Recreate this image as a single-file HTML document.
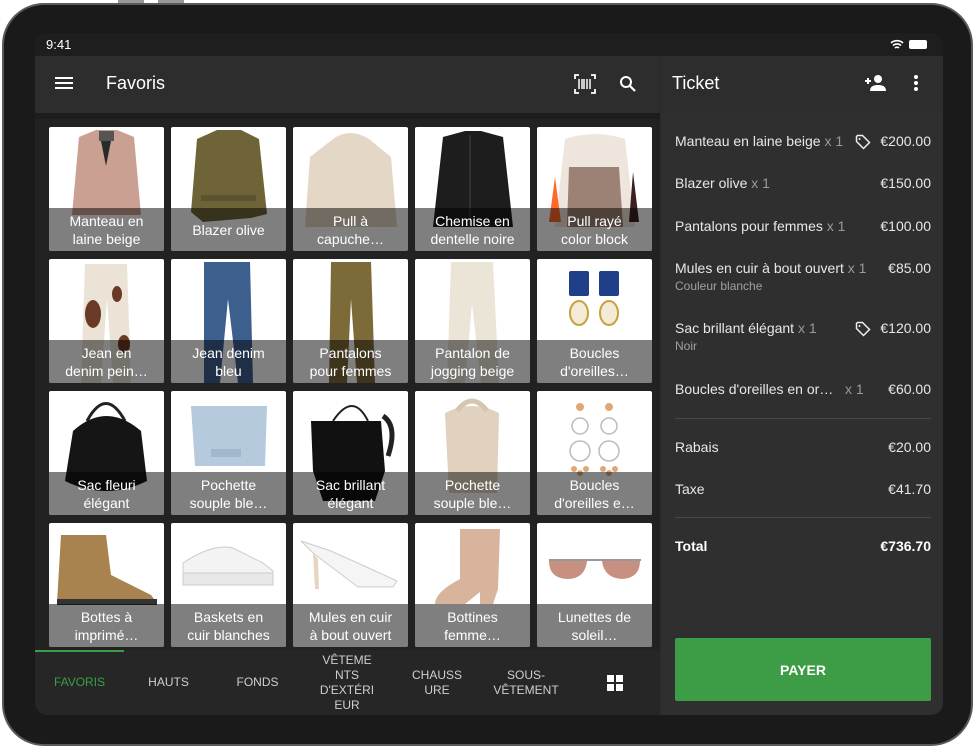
<!DOCTYPE html>
<html><head><meta charset="utf-8"><style>
*{margin:0;padding:0;box-sizing:border-box}
body{width:975px;height:748px;background:#fff;font-family:"Liberation Sans",Roboto,sans-serif;position:relative;overflow:hidden}
.dev{position:absolute;left:2px;top:3px;width:971px;height:743px;border-radius:42px;background:#1a1a1a;border:2px solid #5a5a5a}
.scr{position:absolute;left:35px;top:33px;width:908px;height:682px;border-radius:12px;background:#222;overflow:hidden}
.abs{position:absolute}
.sb{left:0;top:0;width:908px;height:23px;background:#1e1e1e;color:#fff;font-size:13px}
.ab{left:0;top:23px;width:625px;height:57px;background:#2d2d2d}
.rp{left:625px;top:23px;width:283px;height:659px;background:#2f2f2f;border-left:1px solid #2a2a2a}
.tile{position:absolute;width:115px;height:124px;background:#fff;border-radius:2px;overflow:hidden}
.tile svg{position:absolute;left:0;top:0}
.lb{position:absolute;left:0;bottom:0;width:115px;height:43px;background:rgba(0,0,0,.5);color:#fff;font-size:14px;line-height:18px;text-align:center;display:flex;align-items:center;justify-content:center;padding:0 3px}
.row{position:absolute;left:14px;width:256px;color:#e8e8e8;font-size:14px}
.row .q{color:#9a9a9a}
.row .p{position:absolute;right:0;top:0}
.row .s{color:#a0a0a0;font-size:12px;margin-top:3px}
.tab{position:absolute;top:617px;height:65px;color:#cfcfcf;font-size:12px;text-align:center;display:flex;align-items:center;justify-content:center;line-height:15px}
</style></head><body>
<div class="dev"></div>
<div class="abs" style="left:118px;top:0;width:26px;height:3px;background:#999"></div>
<div class="abs" style="left:158px;top:0;width:26px;height:3px;background:#999"></div>
<div class="scr">
 <div class="abs sb"><span class="abs" style="left:11px;top:4px">9:41</span>
  <svg class="abs" style="left:855px;top:6px" width="14" height="11" viewBox="0 0 14 11"><path d="M1 4a9 9 0 0 1 12 0M3 6.5a6 6 0 0 1 8 0M5 9a3 3 0 0 1 4 0" stroke="#fff" stroke-width="1.6" fill="none"/></svg>
  <div class="abs" style="left:874px;top:7px;width:18px;height:9px;background:#fff;border-radius:2px"></div>
 </div>
 <div class="abs ab">
  <svg class="abs" style="left:20px;top:20px" width="18" height="14"><rect y="1" width="18" height="2" fill="#fff"/><rect y="6" width="18" height="2" fill="#fff"/><rect y="11" width="18" height="2" fill="#fff"/></svg>
  <div class="abs" style="left:71px;top:17px;color:#fff;font-size:18px">Favoris</div>
  <svg class="abs" style="left:539px;top:18px" width="22" height="20" viewBox="0 0 22 20"><path d="M1 5V1h4M17 1h4v4M21 15v4h-4M5 19H1v-4" stroke="#fff" stroke-width="1.8" fill="none"/><path d="M5 5v10M8 5v10M10 5v10M13 5v10M16 5v10" stroke="#fff" stroke-width="1.5"/></svg>
  <svg class="abs" style="left:584px;top:19px" width="18" height="18" viewBox="0 0 18 18"><circle cx="7" cy="7" r="5" stroke="#fff" stroke-width="2" fill="none"/><path d="M10.5 10.5L16 16" stroke="#fff" stroke-width="2.2"/></svg>
 </div>
 <div class="abs rp">
  <div class="abs" style="left:0;top:0;width:283px;height:57px;background:#2d2d2d"></div>
  <div class="abs" style="left:11px;top:17px;color:#fff;font-size:18px">Ticket</div>
  <svg class="abs" style="left:203px;top:18px" width="22" height="18" viewBox="0 0 22 18"><path d="M1 7h6M4 4v6" stroke="#fff" stroke-width="2"/><circle cx="14" cy="5" r="4" fill="#fff"/><path d="M6 17c0-5 4-6 8-6s8 1 8 6z" fill="#fff"/></svg>
  <svg class="abs" style="left:253px;top:19px" width="4" height="16"><circle cx="2" cy="2" r="2" fill="#fff"/><circle cx="2" cy="8" r="2" fill="#fff"/><circle cx="2" cy="14" r="2" fill="#fff"/></svg>
  <div style="position:absolute;left:0;top:0;width:283px;height:659px">
   <div class="row" style="top:77px">Manteau en laine beige <span class="q">x 1</span><svg class="abs" style="left:180px;top:1px" width="16" height="16" viewBox="0 0 16 16"><path d="M1.5 2.5v5l7 7 6-6-7-7h-5z" stroke="#eee" stroke-width="1.5" fill="none"/><circle cx="4.5" cy="5" r="1" fill="#eee"/></svg><span class="p">€200.00</span></div>
   <div class="row" style="top:119px">Blazer olive <span class="q">x 1</span><span class="p">€150.00</span></div>
   <div class="row" style="top:162px">Pantalons pour femmes <span class="q">x 1</span><span class="p">€100.00</span></div>
   <div class="row" style="top:204px">Mules en cuir à bout ouvert <span class="q">x 1</span><span class="p">€85.00</span><div class="s">Couleur blanche</div></div>
   <div class="row" style="top:264px">Sac brillant élégant <span class="q">x 1</span><svg class="abs" style="left:180px;top:1px" width="16" height="16" viewBox="0 0 16 16"><path d="M1.5 2.5v5l7 7 6-6-7-7h-5z" stroke="#eee" stroke-width="1.5" fill="none"/><circle cx="4.5" cy="5" r="1" fill="#eee"/></svg><span class="p">€120.00</span><div class="s">Noir</div></div>
   <div class="row" style="top:325px">Boucles d'oreilles en or…&nbsp;&nbsp; <span class="q">x 1</span><span class="p">€60.00</span></div>
   <div class="abs" style="left:14px;top:362px;width:256px;height:1px;background:#484848"></div>
   <div class="row" style="top:383px">Rabais<span class="p">€20.00</span></div>
   <div class="row" style="top:425px">Taxe<span class="p">€41.70</span></div>
   <div class="abs" style="left:14px;top:461px;width:256px;height:1px;background:#484848"></div>
   <div class="row" style="top:482px;font-weight:bold;color:#fff">Total<span class="p">€736.70</span></div>
   <div class="abs" style="left:14px;top:582px;width:256px;height:63px;background:#3d9d47;border-radius:2px;color:#fff;font-size:14px;font-weight:bold;display:flex;align-items:center;justify-content:center">PAYER</div>
  </div>
 </div>
 <div class="abs" style="left:0;top:80px;width:625px;height:6px;background:#1d1d1d"></div>

 <div class="tile" style="left:14px;top:94px"><svg width="115" height="124"><path d="M30 10L47 3h21l17 7 7 78H23z" fill="#c9a092"/><path d="M50 4h15v10H50z" fill="#555"/><path d="M52 14l5 25 5-25z" fill="#2a2a2a"/></svg><div class="lb">Manteau en<br>laine beige</div></div>
 <div class="tile" style="left:136px;top:94px"><svg width="115" height="124"><path d="M26 12L46 3h24l18 9 8 75-16 4-48 4-12-10z" fill="#6e6437"/><path d="M30 68h55v6H30z" fill="#5a5230"/></svg><div class="lb">Blazer olive</div></div>
 <div class="tile" style="left:258px;top:94px"><svg width="115" height="124"><path d="M40 12Q57 0 76 12L98 30l6 70H12l5-70z" fill="#e4d7c5"/></svg><div class="lb">Pull à<br>capuche…</div></div>
 <div class="tile" style="left:380px;top:94px"><svg width="115" height="124"><path d="M28 10L50 4h16l22 6 10 90H18z" fill="#1d1d1d"/><path d="M55 8v90" stroke="#444"/></svg><div class="lb">Chemise en<br>dentelle noire</div></div>
 <div class="tile" style="left:502px;top:94px"><svg width="115" height="124"><path d="M28 12Q57 2 88 12l10 88H18z" fill="#eee5dd"/><path d="M32 40h50l4 60H30z" fill="#9b8275"/><path d="M18 50l-6 45h12z" fill="#ff6a2a"/><path d="M96 45l6 50H92z" fill="#3a2020"/></svg><div class="lb">Pull rayé<br>color block</div></div>

 <div class="tile" style="left:14px;top:226px"><svg width="115" height="124"><path d="M36 5h42l4 119H64L58 40l-6 84H32z" fill="#ebe4d6"/><ellipse cx="44" cy="55" rx="8" ry="14" fill="#6b3a26"/><ellipse cx="68" cy="35" rx="5" ry="8" fill="#6b3a26"/><ellipse cx="75" cy="85" rx="6" ry="9" fill="#6b3a26"/></svg><div class="lb">Jean en<br>denim pein…</div></div>
 <div class="tile" style="left:136px;top:226px"><svg width="115" height="124"><path d="M33 3h46l3 121H67L57 40l-8 84H33z" fill="#3d5f8e"/></svg><div class="lb">Jean denim<br>bleu</div></div>
 <div class="tile" style="left:258px;top:226px"><svg width="115" height="124"><path d="M38 3h40l4 121H64L58 40l-4 84H36z" fill="#7c6a38"/></svg><div class="lb">Pantalons<br>pour femmes</div></div>
 <div class="tile" style="left:380px;top:226px"><svg width="115" height="124"><path d="M36 3h42l6 121H66L57 45l-7 79H32z" fill="#ebe5d8"/></svg><div class="lb">Pantalon de<br>jogging beige</div></div>
 <div class="tile" style="left:502px;top:226px"><svg width="115" height="124"><rect x="32" y="12" width="20" height="25" rx="2" fill="#1f3f88"/><rect x="62" y="12" width="20" height="25" rx="2" fill="#1f3f88"/><ellipse cx="42" cy="54" rx="9" ry="12" fill="#f3ebd6" stroke="#c8a040" stroke-width="2"/><ellipse cx="72" cy="54" rx="9" ry="12" fill="#f3ebd6" stroke="#c8a040" stroke-width="2"/></svg><div class="lb">Boucles<br>d'oreilles…</div></div>

 <div class="tile" style="left:14px;top:358px"><svg width="115" height="124"><path d="M38 30Q57 -5 76 30" stroke="#222" stroke-width="3" fill="none"/><path d="M24 40Q57 10 92 40L98 90Q57 110 16 90z" fill="#151515"/></svg><div class="lb">Sac fleuri<br>élégant</div></div>
 <div class="tile" style="left:136px;top:358px"><svg width="115" height="124"><path d="M20 15h76l-2 60H24z" fill="#b5cadc"/><rect x="40" y="58" width="30" height="8" fill="#a0b8cc"/></svg><div class="lb">Pochette<br>souple ble…</div></div>
 <div class="tile" style="left:258px;top:358px"><svg width="115" height="124"><path d="M40 30Q60 0 75 30" stroke="#222" stroke-width="2" fill="none"/><path d="M18 30h70l4 50-10 30H30l-10-30z" fill="#111"/><path d="M90 25q15 10 5 40" stroke="#222" stroke-width="5" fill="none"/></svg><div class="lb">Sac brillant<br>élégant</div></div>
 <div class="tile" style="left:380px;top:358px"><svg width="115" height="124"><path d="M30 22Q57 8 84 22l-2 80H34z" fill="#e0d2bf"/><path d="M42 20Q57 0 72 20" stroke="#d6c6b1" stroke-width="5" fill="none"/></svg><div class="lb">Pochette<br>souple ble…</div></div>
 <div class="tile" style="left:502px;top:358px"><svg width="115" height="124" fill="none" stroke="#bbb" stroke-width="1.5"><circle cx="43" cy="16" r="4" fill="#e0a878" stroke="none"/><circle cx="72" cy="16" r="4" fill="#e0a878" stroke="none"/><circle cx="43" cy="35" r="8"/><circle cx="72" cy="35" r="8"/><circle cx="43" cy="60" r="10"/><circle cx="72" cy="60" r="10"/><g fill="#e0a878" stroke="none"><circle cx="37" cy="78" r="3"/><circle cx="43" cy="82" r="3"/><circle cx="49" cy="78" r="3"/><circle cx="66" cy="78" r="3"/><circle cx="72" cy="82" r="3"/><circle cx="78" cy="78" r="3"/></g></svg><div class="lb">Boucles<br>d'oreilles e…</div></div>

 <div class="tile" style="left:14px;top:490px"><svg width="115" height="124"><path d="M12 12h45l5 40 40 20 6 8H8z" fill="#a8824f"/><rect x="8" y="76" width="100" height="6" fill="#333"/></svg><div class="lb">Bottes à<br>imprimé…</div></div>
 <div class="tile" style="left:136px;top:490px"><svg width="115" height="124"><path d="M12 40q30-20 50-15l30 15 10 8v14H12z" fill="#f3f3f3" stroke="#ccc"/><path d="M12 50h90v12H12z" fill="#e8e8e8" stroke="#ccc"/></svg><div class="lb">Baskets en<br>cuir blanches</div></div>
 <div class="tile" style="left:258px;top:490px"><svg width="115" height="124"><path d="M8 18l30 10 40 18 26 12-4 6H65L20 30z" fill="#f5f5f5" stroke="#ccc"/><path d="M20 30l2 36h4l-1-30" fill="#e6d5c0"/></svg><div class="lb">Mules en cuir<br>à bout ouvert</div></div>
 <div class="tile" style="left:380px;top:490px"><svg width="115" height="124"><path d="M45 6h40l-2 60-5 15H65v-12l-15 12H20q0-12 25-25z" fill="#d9b49c"/></svg><div class="lb">Bottines<br>femme…</div></div>
 <div class="tile" style="left:502px;top:490px"><svg width="115" height="124"><path d="M12 38h38q-2 18-20 18Q12 55 12 38zM65 38h38q0 17-18 18-18-1-20-18z" fill="#c89080"/><path d="M12 37h92" stroke="#999" stroke-width="2"/></svg><div class="lb">Lunettes de<br>soleil…</div></div>

 <div class="abs" style="left:0;top:617px;width:625px;height:65px;background:#262626"></div>
 <div class="abs" style="left:0;top:617px;width:89px;height:2px;background:#3d9d47"></div>
 <div class="tab" style="left:0;width:89px;color:#3d9d47">FAVORIS</div>
 <div class="tab" style="left:89px;width:89px">HAUTS</div>
 <div class="tab" style="left:178px;width:89px">FONDS</div>
 <div class="tab" style="left:282px;width:60px">VÊTEME<br>NTS<br>D'EXTÉRI<br>EUR</div>
 <div class="tab" style="left:372px;width:60px">CHAUSS<br>URE</div>
 <div class="tab" style="left:446px;width:90px">SOUS-<br>VÊTEMENT</div>
 <svg class="abs" style="left:572px;top:642px" width="16" height="16"><rect width="7" height="7" fill="#fff"/><rect x="9" width="7" height="7" fill="#fff"/><rect y="9" width="7" height="7" fill="#fff"/><rect x="9" y="9" width="7" height="7" fill="#fff"/></svg>
</div>
</body></html>
